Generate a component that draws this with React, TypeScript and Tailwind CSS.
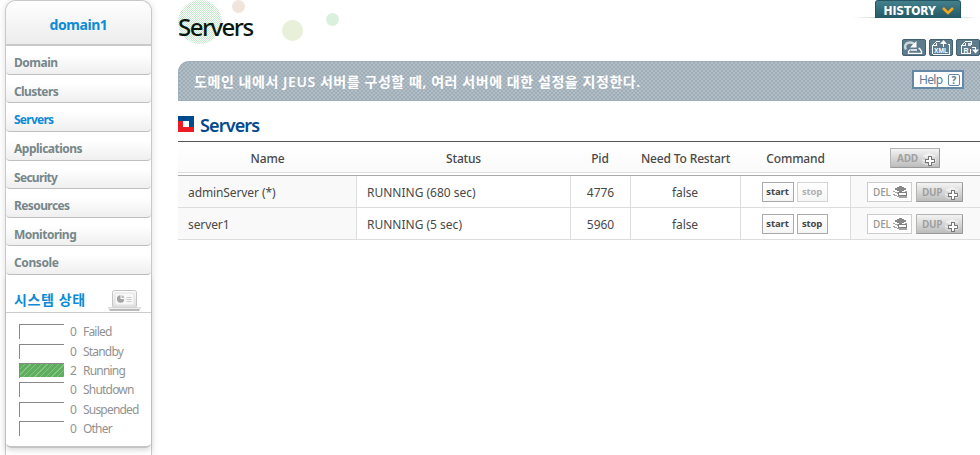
import React from "react";

const menu = [
  { label: "Domain", cls: "h-[29px] tracking-[-0.5px]" },
  { label: "Clusters", cls: "h-[28px] tracking-[-0.6px] pt-[7px]!" },
  { label: "Servers", cls: "h-[29px] tracking-[-0.75px] text-[#0c8bd6]!" },
  { label: "Applications", cls: "h-[29px] tracking-[-0.5px]" },
  { label: "Security", cls: "h-[28px] tracking-[-0.7px] pt-[7px]!" },
  { label: "Resources", cls: "h-[29px] tracking-[-0.6px]" },
  { label: "Monitoring", cls: "h-[28px] tracking-[-0.5px] pt-[7px]!" },
  { label: "Console", cls: "h-[29px] tracking-[-0.4px]" },
];

const states = [
  { n: 0, label: "Failed", cls: "h-[20px]" },
  { n: 0, label: "Standby", cls: "h-[19px]" },
  { n: 2, label: "Running", cls: "h-[19px]" },
  { n: 0, label: "Shutdown", cls: "h-[20px]" },
  { n: 0, label: "Suspended", cls: "h-[19px]" },
  { n: 0, label: "Other", cls: "h-[19px]" },
];

const rows = [
  { name: "adminServer (*)", status: "RUNNING (680 sec)", pid: 4776, stop: false },
  { name: "server1", status: "RUNNING (5 sec)", pid: 5960, stop: true },
];

const cols = "grid grid-cols-[179px_214px_60px_110px_110px_129px]";

function LaptopIcon() {
  return (
    <svg width="33" height="21" viewBox="0 0 33 21" fill="none">
      <defs>
        <linearGradient id="lap" x1="0" y1="0" x2="0" y2="1">
          <stop offset="0" stopColor="#fff" />
          <stop offset="1" stopColor="#ddd" />
        </linearGradient>
      </defs>
      <rect x="4.5" y=".5" width="24" height="17" rx="2" fill="url(#lap)" stroke="#c4c4c4" />
      <rect x="7" y="3" width="19" height="12" fill="#f8f8f8" stroke="#e2e2e2" />
      <path d="M0 17.5h33l-2 2.500H2z" fill="#eee" stroke="#ccc" strokeWidth=".6" />
      <path d="M1.500 20h30" stroke="#999" strokeWidth="1.200" />
      <path d="M12.500 9V5.300a3.700 3.700 0 1 0 3.800 3.900z" fill="#a4a4a4" />
      <path d="M13.500 8V5a3.500 3.500 0 0 1 3 3z" fill="#bbb" />
      <path d="M18.500 7.500h5M18.500 9.500h5M18.500 11.500h5" stroke="#ccc" />
    </svg>
  );
}

function PlusStack() {
  return (
    <svg width="19" height="15" viewBox="0 0 19 15" shapeRendering="crispEdges" className="block">
      <path d="M2 4l7-3 7 3-7 3zM2 7l7 3 7-3v2l-7 3-7-3zM2 10l7 3 7-3v1l-7 3-7-3z" fill="#fff" opacity=".5" />
      <path d="M8.500 4.500h3v3h3v3h-3v3h-3v-3h-3v-3h3z" fill="#fff" stroke="#777" />
    </svg>
  );
}

function MinusStack() {
  return (
    <svg width="15" height="14" viewBox="0 0 15 14" shapeRendering="crispEdges" className="block shrink-0">
      <path d="M1 4l6.500-3L14 4 7.500 7z" fill="#888" />
      <path d="M.5 6.500l7 2.500 6.500-2.500M.5 9.500l6 2.500h7" stroke="#a4a4a4" strokeWidth="1.200" fill="none" />
      <rect x="5.500" y="7.500" width="8" height="3" fill="#fff" stroke="#808080" />
    </svg>
  );
}

function GreyButton({ text }: { text: string }) {
  return (
    <div className="flex h-5 items-center rounded-[1px] border border-[#b4b4b4] border-r-[#9a9a9a] border-b-[#999] bg-linear-to-b from-[#f4f4f4] to-[#bcbcbc] pl-[5px] font-['Open_Sans'] text-[10px] font-bold text-[#a0a0a0]">
      <span className={"shrink-0 tracking-[-0.3px] " + (text === "ADD" ? "w-[24px]" : "w-[21px]")}>{text}</span>
      <span className="-mr-2 mt-[2px] shrink-0">
        <PlusStack />
      </span>
    </div>
  );
}

function Command({ text, on }: { text: string; on: boolean }) {
  return (
    <div
      className={
        "flex h-5 items-center justify-center border bg-linear-to-b from-white to-[#f5f5f5] font-['Open_Sans'] text-[9.5px] font-bold tracking-[-0.15px] " +
        (text === "start" ? "w-8 " : "w-[31px] ") +
        (on ? "border-[#aaa] text-[#444]" : "border-[#d4d4d4] text-[#b0b0b0]")
      }
    >
      {text}
    </div>
  );
}

function ToolIcon({ kind }: { kind: string }) {
  return (
    <svg width="24" height="17" viewBox="0 0 24 17" className="block shrink-0">
      <rect x=".5" y=".5" width="23" height="16" rx="1.500" fill="#5d7b8c" stroke="#426174" />
      {kind === "link" && (
        <g fill="none" stroke="#fff">
          <path d="M4 10.500C1.800 7 4 3.500 8 3.500c2.500 0 3.800 1 4.500 2.500" stroke="#ccd6db" strokeWidth="2.400" />
          <path d="M14.500 2v6.500H8z" fill="#fff" stroke="none" />
          <path d="M8.500 10.500L6.500 12.300v2h13v-2L17.500 9.500h-1M9 11h6" strokeWidth="1.300" />
        </g>
      )}
      {kind === "xml" && (
        <g fill="none" stroke="#fff">
          <path d="M3.500 15v-8.500h4v-3M3.500 6.500l4-4h3M19 5.500h1.500v9.500h-17M14.500 8V4" shapeRendering="crispEdges" />
          <path d="M11 5l3.500-4L18 5z" fill="#fff" stroke="none" />
          <text x="5" y="13.500" fontSize="7" fontWeight="700" textLength="14" lengthAdjust="spacingAndGlyphs" fontFamily="Liberation Sans" fill="#fff" stroke="none">XML</text>
        </g>
      )}
      {kind === "export" && (
        <g fill="none" stroke="#fff">
          <path d="M5.500 14.500v-8l4-4h6v3M5.500 6.500h4v-3M5.500 14.500h8M15.500 8.500h4V11M14.500 10v4.500" shapeRendering="crispEdges" />
          <text x="7.500" y="13.500" fontSize="7" fontWeight="700" fontFamily="Liberation Sans" fill="#fff" stroke="none">R</text>
          <path d="M16 10.500h7l-3.500 4z" fill="#fff" stroke="none" />
          <path d="M12 4h3v3h-3z" fill="#dce4e8" stroke="none" />
        </g>
      )}
    </svg>
  );
}

function Sidebar() {
  return (
    <aside className="ml-[5px] flex h-[455px] w-[147px] shrink-0 flex-col rounded-t-[11px] border border-b-0 border-[#c9c9c9] bg-white shadow-[0_0_7px_rgba(0,0,0,0.13)]">
      <div className="flex h-[45px] shrink-0 items-center justify-center rounded-t-[10px] border-b-2 border-[#c9c9c9] bg-linear-to-b from-white to-[#ececec] pt-[4px] text-[14px] font-bold tracking-[-0.45px] text-[#0c8bd6]">
        domain1
      </div>
      <nav className="text-[12px] font-bold text-[#76878a]">
        {menu.map((m) => (
          <div key={m.label} className={"flex items-center rounded-b-[4px] border-b border-[#bfbfbf] bg-linear-to-b from-white from-30% to-[#efefef] pt-[5px] pl-2 " + m.cls}>
            {m.label}
          </div>
        ))}
      </nav>
      <section className="h-[173px] shrink-0 rounded-b-[5px] border-b-2 border-[#c4c4c4] shadow-[0_3px_5px_rgba(0,0,0,0.12)]">
        <div className="flex h-[38px] justify-between border-b border-[#ccc] pr-[10px] pl-2">
          <span className="pt-[15px] text-[14px] leading-[20px] font-bold tracking-[0.6px] text-[#0c8bd6]">시스템 상태</span>
          <span className="pt-[15px]"><LaptopIcon /></span>
        </div>
        <div className="pt-[11px] pl-[13px] text-[12px] text-[#929292]">
          {states.map((s) => (
            <div key={s.label} className={"flex items-start " + s.cls}>
              <span className="h-[15px] w-[45px] border-t border-l border-[#888]">
                {s.n > 0 && (
                  <span className="block h-[13px] bg-[repeating-linear-gradient(135deg,#5fae5f_0px,#5fae5f_3px,#85c485_3px,#85c485_4px)]" />
                )}
              </span>
              <span className="ml-[6px] w-[13px] leading-[16px]">{s.n}</span>
              <span className="leading-[16px] tracking-[-0.8px]">{s.label}</span>
            </div>
          ))}
        </div>
      </section>
    </aside>
  );
}

export default function App() {
  return (
    <div className="flex h-[455px] w-[980px] overflow-hidden bg-white font-['Noto_Sans','Noto_Sans_CJK_KR',sans-serif] text-[#484848]">
      <Sidebar />
      <main className="ml-[26px] w-[802px] shrink-0">
        <header className="relative flex h-[61px] justify-between">
          <svg className="absolute top-0 left-0" width="170" height="45" viewBox="0 0 170 45">
            <defs>
              <pattern id="dots" width="2" height="2" patternUnits="userSpaceOnUse">
                <path d="M0 0h1v1H0zM1 1h1v1H1z" fill="#c3e8cb" shapeRendering="crispEdges" />
              </pattern>
            </defs>
            <circle cx="22" cy="22" r="22" fill="url(#dots)" />
            <circle cx="60.500" cy="6.500" r="6.500" fill="#f0e4db" />
            <circle cx="114.500" cy="30.500" r="10.500" fill="#e8f0d9" />
            <circle cx="154.500" cy="19.500" r="6.500" fill="#daf0dd" />
          </svg>
          <h1 className="relative pt-[11px] text-[24px] leading-[32px] font-medium tracking-[-1.55px] text-[#08180f]">Servers</h1>
          <div className="flex flex-col items-end">
            <div className="flex h-[18px] w-[128px] items-stretch justify-center bg-linear-to-r from-white via-[#6f9fa8] to-white bg-[length:100%_1px] bg-bottom bg-no-repeat pl-[3px]">
              <div className="flex w-[86px] items-center rounded-t-[3px] border border-b-0 border-[#235662] bg-linear-to-b from-[#43808c] to-[#245966] pt-[3px] pl-[8px] font-['DejaVu_Sans_Condensed','DejaVu_Sans'] text-[12px] font-bold text-white">
                <span className="w-[58px] shrink-0 tracking-[-0.1px]">HISTORY</span>
                <svg width="12" height="8" viewBox="0 0 12 8" className="shrink-0">
                  <path d="M1 1l5 5 5-5" fill="none" stroke="#f9a51b" strokeWidth="2.600" />
                </svg>
              </div>
            </div>
            <div className="mt-[21px] flex gap-[3px]">
              <ToolIcon kind="link" />
              <ToolIcon kind="xml" />
              <ToolIcon kind="export" />
            </div>
          </div>
        </header>
        <div className="flex h-10 items-center justify-between rounded-tl-[11px] border border-r-0 border-[#9fb0bc] bg-[#b2bec7] bg-[conic-gradient(#9fadb7_25%,transparent_0_50%,#9fadb7_0_75%,transparent_0)] bg-[length:4px_4px] pr-4 pl-[15px]">
          <span className="text-[14px] font-semibold tracking-[0.57px] whitespace-nowrap text-white">도메인 내에서 JEUS 서버를 구성할 때, 여러 서버에 대한 설정을 지정한다.</span>
          <span className="mb-[3px] flex h-[19px] w-[52px] items-center justify-between border-2 border-[#6488a6] bg-white pr-[2px] pl-[5px] text-[12px] text-[#5c7c99]">
            <span className="tracking-[-0.7px]">Help</span>
            <span className="flex h-3 w-3 items-center justify-center rounded-[2px] border border-[#6488a6] text-[10px] leading-none font-bold">?</span>
          </span>
        </div>
        <div className="flex h-10 items-start pt-[15px]">
          <svg width="16" height="16" viewBox="0 0 16 16" shapeRendering="crispEdges">
            <path d="M0 0h16v11H0z" fill="#004a8f" />
            <path d="M0 5h5v6h11v5H0z" fill="#ed1c24" />
            <path d="M5 5h6v6H5z" fill="#fff" />
          </svg>
          <h2 className="ml-[6px] -mt-[3px] text-[18px] leading-[24px] font-semibold tracking-[-0.85px] text-[#004a8f]">Servers</h2>
        </div>
        <div className="text-[12px]">
          <div className={cols + " h-[32px] items-center border-t border-b border-t-[#555] border-b-[#ddd] bg-linear-to-b from-white to-[#fafafa] text-center font-medium"}>
            <span className="pt-[3px] tracking-[-0.15px]">Name</span>
            <span className="pt-[3px] pr-px tracking-[-0.2px]">Status</span>
            <span className="pt-[3px] pr-[2px] tracking-[-0.1px]">Pid</span>
            <span className="pt-[3px] pr-px tracking-[-0.15px]">Need To Restart</span>
            <span className="pt-[3px] pr-px tracking-[-0.15px]">Command</span>
            <div className="flex justify-center pt-[2px] pr-[2px]"><div className="w-[50px]"><GreyButton text="ADD" /></div></div>
          </div>
          <div className="mt-[2px] border-t border-[#aaa]">
            {rows.map((r) => (
              <div key={r.name} className={cols + " h-8 border-b border-[#ddd] *:flex *:items-center *:border-r *:border-[#ddd] *:last:border-r-0"}>
                <div className="bg-[#f9f9f9] pt-[2px] pl-[10px] tracking-[-0.1px]">{r.name}</div>
                <div className="pt-[2px] pl-[10px] tracking-[0px]">{r.status}</div>
                <div className="justify-center pt-[2px]">{r.pid}</div>
                <div className="justify-center pt-[2px] pr-px tracking-[-0.1px]">false</div>
                <div className="justify-center gap-[3px] pt-px pr-[2px]">
                  <Command text="start" on />
                  <Command text="stop" on={r.stop} />
                </div>
                <div className="gap-1 bg-[#f9f9f9] pt-px pl-4">
                  <div className="flex h-5 w-[45px] items-center border border-[#ccc] bg-white pl-[5px] font-['Open_Sans'] text-[10px] font-semibold text-[#999]">
                    <span className="w-[20px] shrink-0 tracking-[-0.2px]">DEL</span>
                    <MinusStack />
                  </div>
                  <div className="w-[47px]"><GreyButton text="DUP" /></div>
                </div>
              </div>
            ))}
          </div>
        </div>
      </main>
    </div>
  );
}
